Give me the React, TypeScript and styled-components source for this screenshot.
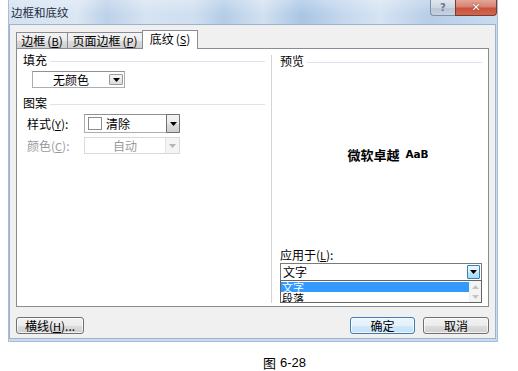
import React from "react";
import styled, { createGlobalStyle, css } from "styled-components";

const GlobalStyle = createGlobalStyle`
  html, body { margin: 0; padding: 0; background: #ffffff; }
  body {
    font-family: "Noto Sans CJK SC", "DejaVu Sans", sans-serif;
    font-size: 12px;
    color: #000;
  }
  * { box-sizing: border-box; }
`;

const Page = styled.div`
  width: 518px;
  height: 371px;
  padding-left: 8px;
  display: flex;
  flex-direction: column;
  overflow: hidden;
  background: #fff;
`;

const Window = styled.div`
  width: 490px;
  height: 342px;
  display: flex;
  flex-direction: column;
  background: #c9dcef;
  border: 1px solid #a9bdd6;
  border-top: none;
`;

const TitleBar = styled.div`
  height: 24px;
  display: flex;
  align-items: flex-start;
  background:
    linear-gradient(180deg, rgba(255,255,255,0.25), rgba(255,255,255,0) 60%),
    linear-gradient(90deg, #d3e2f2 0%, #dae6f3 14%, #bcd1e9 20%, #d5e3f2 28%,
      #cfdff0 38%, #b4cce7 44%, #d2e1f1 52%, #a9c5e4 60%, #c3d7ed 68%,
      #d6e4f3 76%, #b7cee8 86%, #c8dbef 100%);
`;

const Title = styled.div`
  padding: 5px 0 0 2px;
  font-size: 11.5px;
  line-height: 14px;
  color: #1e2a3a;
`;

const CaptionButtons = styled.div`
  margin-left: auto;
  display: flex;
`;

const CaptionButton = styled.div<{ $kind: "help" | "close" }>`
  height: 16px;
  display: flex;
  align-items: center;
  justify-content: center;
  font-family: "DejaVu Sans", sans-serif;
  font-weight: bold;
  ${(p) =>
    p.$kind === "help"
      ? css`
          width: 25px;
          border: 1px solid #7e8fa6;
          border-top: none;
          border-right: none;
          border-radius: 0 0 0 4px;
          background: linear-gradient(180deg, #dfe6ee 0%, #cdd6e1 50%, #b9c6d6 51%, #c6d2e0 100%);
          color: #6b7a8f;
          font-size: 10px;
        `
      : css`
          width: 42px;
          border: 1px solid #7a3a32;
          border-top: none;
          border-radius: 0 0 4px 0;
          background: linear-gradient(180deg, #e3a697 0%, #d88272 45%, #c9523d 55%, #d0664f 100%);
          color: #ffffff;
          font-size: 11px;
          text-shadow: 0 0 2px #7a2a20;
        `}
`;

const Client = styled.div`
  flex: 1;
  margin: 0 1px 2px 0;
  border: 1px solid #9fb2c8;
  background: #f0f0f0;
  padding: 5px 6px 0 6px;
  display: flex;
  flex-direction: column;
`;

const TabStrip = styled.div`
  height: 19px;
  margin-bottom: -1px;
  display: flex;
  align-items: flex-end;
  position: relative;
  z-index: 1;
`;

const Tab = styled.div<{ $w: number; $active?: boolean }>`
  width: ${(p) => p.$w}px;
  display: flex;
  align-items: center;
  justify-content: center;
  gap: 2px;
  border: 1px solid #898c95;
  border-bottom: none;
  line-height: 14px;
  white-space: nowrap;
  & + & { margin-left: -1px; }
  ${(p) =>
    p.$active
      ? css`
          height: 19px;
          background: #ffffff;
          padding-bottom: 2px;
        `
      : css`
          height: 16px;
          margin-bottom: 1px;
          background: linear-gradient(180deg, #f3f3f3 0%, #ebebeb 50%, #dddddd 51%, #cfcfcf 100%);
        `}
`;

const Panel = styled.div`
  height: 259px;
  border: 1px solid #898c95;
  background: #ffffff;
  display: flex;
  position: relative;
`;

const LeftCol = styled.div`
  width: 254px;
  padding: 4px 6px 0 6px;
  display: flex;
  flex-direction: column;
`;

const Divider = styled.div`
  width: 1px;
  margin: 6px 0 3px;
  background: #d4d4d4;
`;

const RightCol = styled.div`
  flex: 1;
  padding: 5px 6px 3px 8px;
  display: flex;
  flex-direction: column;
`;

const GroupHeader = styled.div<{ $mt?: number }>`
  display: flex;
  align-items: center;
  gap: 3px;
  line-height: 14px;
  margin-top: ${(p) => p.$mt ?? 0}px;
  &::after {
    content: "";
    flex: 1;
    height: 1px;
    background: #dde3ea;
    margin-top: 2px;
  }
`;

const Combo = styled.div<{ $w: number; $h: number; $disabled?: boolean; $mt?: number; $ml?: number }>`
  width: ${(p) => p.$w}px;
  height: ${(p) => p.$h}px;
  margin-top: ${(p) => p.$mt ?? 0}px;
  margin-left: ${(p) => p.$ml ?? 0}px;
  display: flex;
  align-items: stretch;
  border: 1px solid ${(p) => (p.$disabled ? "#d9d9d9" : "#abadb3")};
  border-top-color: ${(p) => (p.$disabled ? "#d9d9d9" : "#8f9196")};
  background: #ffffff;
  flex-shrink: 0;
`;

const ComboText = styled.div<{ $center?: boolean; $disabled?: boolean }>`
  flex: 1;
  display: flex;
  align-items: center;
  gap: 4px;
  justify-content: ${(p) => (p.$center ? "center" : "flex-start")};
  padding-left: ${(p) => (p.$center ? 0 : 2)}px;
  color: ${(p) => (p.$disabled ? "#9a9a9a" : "#000")};
  line-height: 14px;
  white-space: nowrap;
`;

type DropKind = "inset" | "full" | "hot" | "disabled";

const DropButton = styled.div<{ $kind: DropKind }>`
  width: 14px;
  display: flex;
  align-items: center;
  justify-content: center;
  flex-shrink: 0;
  ${(p) => {
    switch (p.$kind) {
      case "inset":
        return css`
          margin: 2px 1px 2px 0;
          border: 1px solid #9a9a9a;
          border-radius: 1px;
          background: linear-gradient(180deg, #f6f6f6, #dcdcdc);
        `;
      case "full":
        return css`
          border: 1px solid #707070;
          margin: -1px -1px -1px 0;
          border-radius: 1px;
          background: linear-gradient(180deg, #f2f2f2 0%, #ebebeb 50%, #dddddd 51%, #cfcfcf 100%);
        `;
      case "hot":
        return css`
          width: 13px;
          margin: 1px 1px 1px 0;
          border: 1px solid #3c7fb1;
          border-radius: 1px;
          background: linear-gradient(180deg, #eaf6fd 0%, #d9f0fc 50%, #bee6fd 51%, #a7d9f5 100%);
        `;
      default:
        return css`
          border-left: 1px solid #e3e3e3;
          background: #f4f4f4;
        `;
    }
  }}
`;

const Swatch = styled.span`
  width: 14px;
  height: 13px;
  border: 1px solid #8c8c8c;
  background: #fff;
  margin-left: 1px;
`;

const FieldRow = styled.div<{ $mt: number }>`
  display: flex;
  align-items: center;
  margin-top: ${(p) => p.$mt}px;
`;

const FieldLabel = styled.div<{ $disabled?: boolean }>`
  width: 57px;
  margin-left: 4px;
  color: ${(p) => (p.$disabled ? "#9a9a9a" : "#000")};
  line-height: 14px;
  white-space: nowrap;
`;

const PreviewArea = styled.div`
  flex: 1;
  display: flex;
  align-items: center;
  justify-content: center;
  padding-bottom: 8px;
  padding-left: 14px;
`;

const PreviewCJK = styled.span`
  font-weight: bold;
  font-size: 13px;
`;

const PreviewLatin = styled.span`
  font-family: "DejaVu Sans", sans-serif;
  font-weight: bold;
  font-size: 10.5px;
  margin-left: 6px;
`;

const ApplyLabel = styled.div`
  line-height: 14px;
  margin-bottom: 1px;
`;

const ApplyCombo = styled.div`
  height: 17px;
  display: flex;
  border: 1px solid #7a7a7a;
  border-bottom: none;
  background: #fff;
`;

const List = styled.div`
  height: 23px;
  border: 1px solid #646464;
  display: flex;
  background: #fff;
`;

const ListItems = styled.div`
  flex: 1;
  display: flex;
  flex-direction: column;
  gap: 1px;
  padding-top: 1px;
`;

const ListItem = styled.div<{ $selected?: boolean }>`
  height: 10px;
  line-height: 10px;
  font-size: 11px;
  overflow: hidden;
  padding-left: 1px;
  background: ${(p) => (p.$selected ? "#3399ff" : "transparent")};
  color: ${(p) => (p.$selected ? "#ffffff" : "#000")};
`;

const ScrollBar = styled.div`
  width: 12px;
  background: #f4f4f4;
  display: flex;
  flex-direction: column;
  justify-content: space-between;
  align-items: center;
  padding: 4px 0 3px;
  border-left: 1px solid #ededed;
`;

const Footer = styled.div`
  margin-top: 10px;
  display: flex;
  align-items: center;
  justify-content: space-between;
`;

const ButtonGroup = styled.div`
  display: flex;
  gap: 8px;
`;

const Button = styled.div<{ $w: number; $focused?: boolean }>`
  width: ${(p) => p.$w}px;
  height: 17px;
  display: flex;
  align-items: center;
  justify-content: center;
  border: 1px solid ${(p) => (p.$focused ? "#3c7fb1" : "#707070")};
  border-radius: 3px;
  background: ${(p) =>
    p.$focused
      ? "linear-gradient(180deg, #eaf6fd 0%, #e3f1fa 50%, #d3e9f7 51%, #c4e0f3 100%)"
      : "linear-gradient(180deg, #f2f2f2 0%, #ebebeb 50%, #dddddd 51%, #cfcfcf 100%)"};
  box-shadow: inset 0 0 0 1px rgba(255, 255, 255, 0.7);
  line-height: 14px;
  white-space: nowrap;
`;

const Caption = styled.div`
  margin-top: 14px;
  padding-left: 255px;
  display: flex;
  align-items: center;
  gap: 4px;
  line-height: 14px;
`;

const CaptionCJK = styled.span`
  font-size: 13px;
`;

const CaptionNum = styled.span`
  font-family: "Liberation Sans", "DejaVu Sans", sans-serif;
  font-size: 13px;
`;

const Arrow = ({ color = "#000", up = false }: { color?: string; up?: boolean }) => (
  <svg width="7" height="4" viewBox="0 0 7 4">
    <path d={up ? "M0 4H7L3.5 0Z" : "M0 0H7L3.5 4Z"} fill={color} />
  </svg>
);

const Mn = styled.span`
  text-decoration: underline;
  font-size: 11px;
`;

export default function App() {
  return (
    <>
      <GlobalStyle />
      <Page>
        <Window>
          <TitleBar>
            <Title>边框和底纹</Title>
            <CaptionButtons>
              <CaptionButton $kind="help">?</CaptionButton>
              <CaptionButton $kind="close">✕</CaptionButton>
            </CaptionButtons>
          </TitleBar>
          <Client>
            <TabStrip>
              <Tab $w={52}>
                边框<span>(<Mn>B</Mn>)</span>
              </Tab>
              <Tab $w={76}>
                页面边框<span>(<Mn>P</Mn>)</span>
              </Tab>
              <Tab $w={56} $active>
                底纹<span>(<Mn>S</Mn>)</span>
              </Tab>
            </TabStrip>
            <Panel>
              <LeftCol>
                <GroupHeader>填充</GroupHeader>
                <Combo $w={93} $h={17} $mt={4} $ml={9}>
                  <ComboText $center>无颜色</ComboText>
                  <DropButton $kind="inset">
                    <Arrow />
                  </DropButton>
                </Combo>
                <GroupHeader $mt={8}>图案</GroupHeader>
                <FieldRow $mt={4}>
                  <FieldLabel>
                    样式(<Mn>Y</Mn>):
                  </FieldLabel>
                  <Combo $w={96} $h={19}>
                    <ComboText>
                      <Swatch />
                      清除
                    </ComboText>
                    <DropButton $kind="full">
                      <Arrow />
                    </DropButton>
                  </Combo>
                </FieldRow>
                <FieldRow $mt={4}>
                  <FieldLabel $disabled>
                    颜色(<Mn>C</Mn>):
                  </FieldLabel>
                  <Combo $w={96} $h={17} $disabled>
                    <ComboText $center $disabled>
                      自动
                    </ComboText>
                    <DropButton $kind="disabled">
                      <Arrow color="#b5b5b5" />
                    </DropButton>
                  </Combo>
                </FieldRow>
              </LeftCol>
              <Divider />
              <RightCol>
                <GroupHeader>预览</GroupHeader>
                <PreviewArea>
                  <PreviewCJK>微软卓越</PreviewCJK>
                  <PreviewLatin>AaB</PreviewLatin>
                </PreviewArea>
                <ApplyLabel>
                  应用于(<Mn>L</Mn>):
                </ApplyLabel>
                <ApplyCombo>
                  <ComboText>文字</ComboText>
                  <DropButton $kind="hot">
                    <Arrow />
                  </DropButton>
                </ApplyCombo>
                <List>
                  <ListItems>
                    <ListItem $selected>文字</ListItem>
                    <ListItem>段落</ListItem>
                  </ListItems>
                  <ScrollBar>
                    <Arrow color="#c4c4c4" up />
                    <Arrow color="#c4c4c4" />
                  </ScrollBar>
                </List>
              </RightCol>
            </Panel>
            <Footer>
              <Button $w={68}>
                横线(<Mn>H</Mn>)...
              </Button>
              <ButtonGroup>
                <Button $w={65} $focused>
                  确定
                </Button>
                <Button $w={66}>取消</Button>
              </ButtonGroup>
            </Footer>
          </Client>
        </Window>
        <Caption>
          <CaptionCJK>图</CaptionCJK>
          <CaptionNum>6-28</CaptionNum>
        </Caption>
      </Page>
    </>
  );
}
